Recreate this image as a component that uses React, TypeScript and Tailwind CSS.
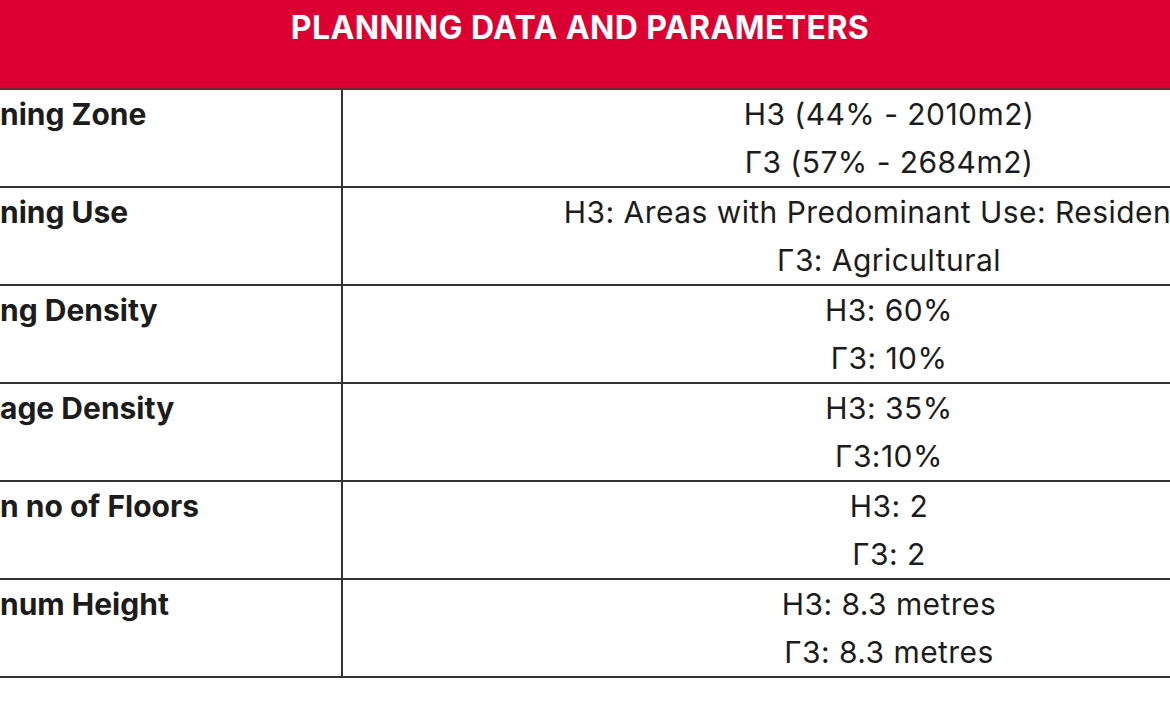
export default function App() {
  const rows = [
    { label: 'ning Zone', values: ['H3 (44% - 2010m2)', 'Γ3 (57% - 2684m2)'] },
    { label: 'ning Use', values: ['H3: Areas with Predominant Use: Residential', 'Γ3: Agricultural'] },
    { label: 'ng Density', values: ['H3: 60%', 'Γ3: 10%'] },
    { label: 'age Density', values: ['H3: 35%', 'Γ3:10%'] },
    { label: 'n no of Floors', values: ['H3: 2', 'Γ3: 2'] },
    { label: 'num Height', values: ['H3: 8.3 metres', 'Γ3: 8.3 metres'] }
  ]

  return (
    <div
      className="w-[1170px] h-[705px] overflow-hidden bg-white text-[#1c1c1c]"
      style={{ fontFamily: 'Inter, "Open Sans", sans-serif' }}
    >
      {/* Header */}
      <div className="h-[90px] bg-[#dc0032] border-b-2 border-[#6b2a33] pt-[4px] pr-[10px] text-center">
        <h1 className="text-[32px] tracking-[0.0125em] leading-[48px] font-bold text-white">
          PLANNING DATA AND PARAMETERS
        </h1>
      </div>

      {/* Table rows */}
      <div className="w-[1435px]">
        {rows.map((row) => (
          <div key={row.label} className="flex border-b-2 border-[#333]">
            <div className="w-[343px] shrink-0 border-r-2 border-[#333] text-[30px] leading-[48px] font-bold whitespace-nowrap">
              {row.label}
            </div>
            <div className="w-[1092px] shrink-0 text-center text-[30px] tracking-[0.015em] leading-[48px] whitespace-nowrap">
              {row.values.map((v) => (
                <div key={v}>{v}</div>
              ))}
            </div>
          </div>
        ))}
      </div>
    </div>
  )
}
